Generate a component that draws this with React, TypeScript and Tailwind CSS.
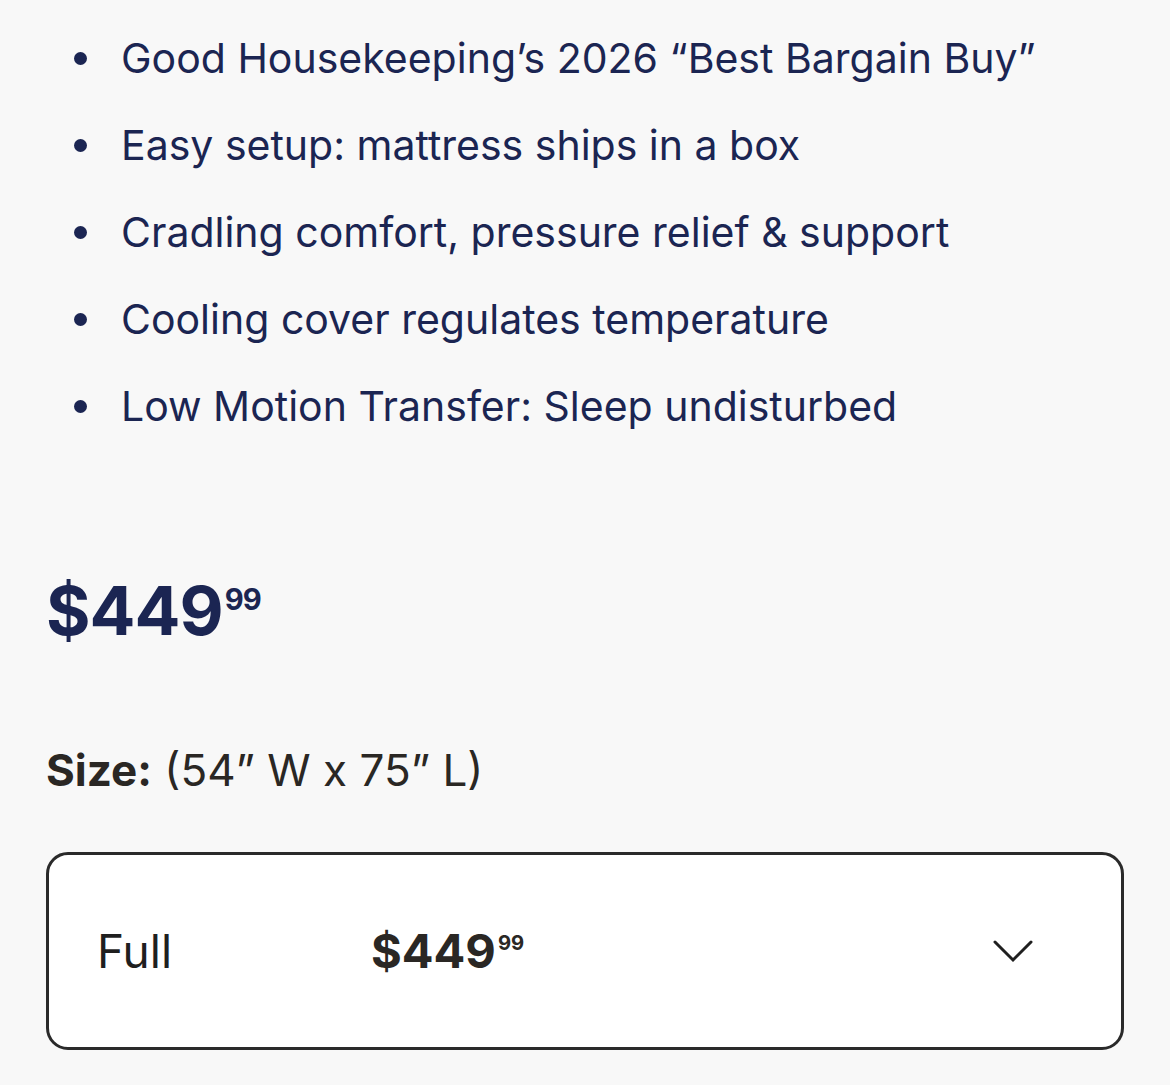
const features = [
  "Good Housekeeping’s 2026 “Best Bargain Buy”",
  "Easy setup: mattress ships in a box",
  "Cradling comfort, pressure relief & support",
  "Cooling cover regulates temperature",
  "Low Motion Transfer: Sleep undisturbed",
];

const Price = ({ dollars, cents, className }: { dollars: string; cents: string; className: string }) => (
  <span className={className}>
    ${dollars}
    <sup className="relative top-[-0.05em] ml-[2px] align-super text-[0.43em] font-bold">{cents}</sup>
  </span>
);

export default function App() {
  return (
    <div className="min-h-screen w-full bg-[#f8f8f8] px-[46px] pt-[15px] font-['Inter',sans-serif]">
      <ul className="flex flex-col">
        {features.map((f) => (
          <li key={f} className="flex items-center text-[41px] leading-[87px] text-[#1b2552]">
            <span className="ml-[28px] mr-[34px] h-[13px] w-[13px] shrink-0 rounded-full bg-[#1b2552]" />
            {f}
          </li>
        ))}
      </ul>

      <div className="mt-[126px] leading-none">
        <Price dollars="449" cents="99" className="text-[68px] font-bold tracking-[-1px] text-[#1b2552]" />
      </div>

      <p className="mt-[104px] text-[44px] leading-none text-[#2a2724]">
        <span className="font-bold">Size:</span> (54” W x 75” L)
      </p>

      <div className="mt-[60px] flex h-[198px] items-center rounded-[22px] border-[3px] border-[#2a2a2a] bg-white pl-[48px] pr-[88px]">
        <span className="w-[274px] text-[46px] text-[#1f1f1f]">Full</span>
        <Price dollars="449" cents="99" className="text-[47px] font-bold text-[#2a2724]" />
        <svg className="ml-auto h-[26px] w-[40px] text-[#1f1f1f]" viewBox="0 0 40 26" fill="none">
          <path d="M2 4 L20 22 L38 4" stroke="currentColor" strokeWidth="3" strokeLinecap="round" />
        </svg>
      </div>
    </div>
  );
}
